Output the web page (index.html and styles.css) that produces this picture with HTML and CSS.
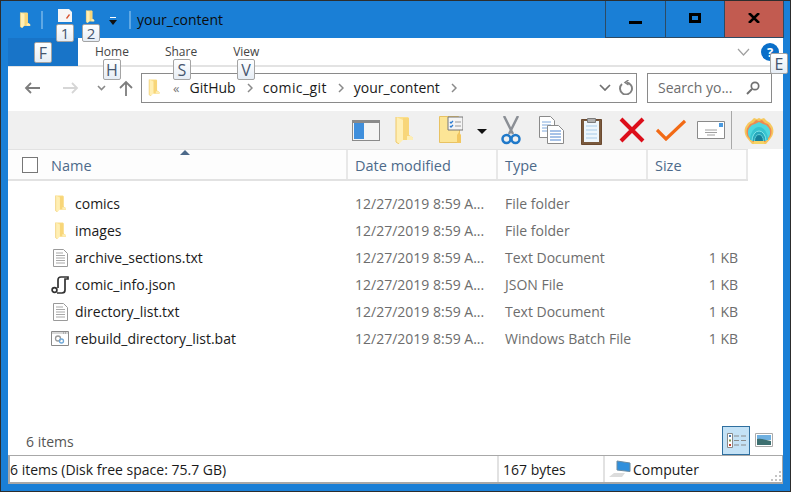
FILE: index.html
```html
<!DOCTYPE html>
<html lang="en">
<head>
    <meta charset="UTF-8">
    <title>your_content</title>
    <link rel="stylesheet" href="styles.css">
</head>
<body>
    <svg class="defs" width="0" height="0">
        <defs>
            <symbol id="folder" viewBox="0 0 18 28">
                <path d="M1 1h12l1 1v17l4 3v2H6l-2 3-3-2z" fill="#fbdf8c"/>
                <path d="M8 2h6v17l4 3v2H8z" fill="#f8d679"/>
                <path d="M12 20h4l2 2v2h-6z" fill="#fdeeb6"/>
                <path d="M1 1l7 3v20l-4 4-3-2z" fill="#ffefb4"/>
                <path d="M1 1v25l3 2" fill="none" stroke="#efc868"/>
            </symbol>
            <symbol id="textfile" viewBox="0 0 15 18">
                <path d="M.5.500h10l4 4v13H.5z" fill="#fff" stroke="#9a9a9a"/>
                <path d="M3 4h7M3 6.500h9M3 9h9M3 11.500h9M3 14h9" stroke="#a8a8a8"/>
            </symbol>
        </defs>
    </svg>
    <div class="window">
        <div class="titlebar">
            <svg class="qa-folder" width="12" height="16"><use href="#folder"/></svg>
            <span class="qa-sep"></span>
            <svg class="qa-props" width="14" height="13" viewBox="0 0 14 13"><path d="M0 0h11l3 3v10H0z" fill="#f6f6f6"/><path d="M8 9l3-4 1 1-3 4z" fill="#d8502a"/></svg>
            <svg class="qa-new" width="12" height="13"><use href="#folder"/></svg>
            <svg class="qa-arrow" width="8" height="8" viewBox="0 0 8 8"><path d="M1 0h6v1H1z" fill="#fff"/><path d="M0 3h8L4 8z" fill="#111"/></svg>
            <span class="qa-sep"></span>
            <span class="title-text">your_content</span>
            <div class="caption-btns">
                <div class="cap-btn"><span class="cap-min"></span></div>
                <div class="cap-btn"><span class="cap-max"></span></div>
                <div class="cap-btn cap-close">
                    <svg width="12" height="10" viewBox="0 0 12 10"><path d="M1 0l5 5 5-5M1 10l5-5 5 5" fill="none" stroke="#000" stroke-width="2.600"/></svg>
                </div>
            </div>
        </div>

        <div class="content">
            <div class="ribbon">
                <div class="file-tab"></div>
                <span class="tab tab-home">Home</span>
                <span class="tab tab-share">Share</span>
                <span class="tab tab-view">View</span>
                <svg class="ribbon-chevron" width="13" height="8" viewBox="0 0 13 8"><path d="M1 1l5.500 6L12 1" fill="none" stroke="#a0a0a0" stroke-width="1.200"/></svg>
                <div class="help">?</div>
            </div>

            <div class="addressbar">
                <svg class="nav nav-back" width="16" height="12" viewBox="0 0 16 12"><path d="M16 6H2M7 1L2 6l5 5" fill="none" stroke="#7d7d7d" stroke-width="1.800"/></svg>
                <svg class="nav nav-fwd" width="16" height="12" viewBox="0 0 16 12"><path d="M0 6h14M9 1l5 5-5 5" fill="none" stroke="#d6d6d6" stroke-width="1.800"/></svg>
                <svg class="nav nav-down" width="9" height="6" viewBox="0 0 9 6"><path d="M1 1l3.500 3.500L8 1" fill="none" stroke="#8a8a8a" stroke-width="1.600"/></svg>
                <svg class="nav nav-up" width="14" height="16" viewBox="0 0 14 16"><path d="M7 16V2M1 8l6-6 6 6" fill="none" stroke="#7d7d7d" stroke-width="1.800"/></svg>
                <div class="pathbox">
                    <svg class="path-folder" width="12" height="17"><use href="#folder"/></svg>
                    <span class="crumb-more">«</span>
                    <span class="crumb">GitHub</span>
                    <svg class="crumb-sep" width="6" height="10" viewBox="0 0 6 10"><path d="M1 1l4 4-4 4" fill="none" stroke="#8a8a8a" stroke-width="1.500"/></svg>
                    <span class="crumb crumb-wide">comic_git</span>
                    <svg class="crumb-sep" width="6" height="10" viewBox="0 0 6 10"><path d="M1 1l4 4-4 4" fill="none" stroke="#8a8a8a" stroke-width="1.500"/></svg>
                    <span class="crumb">your_content</span>
                    <svg class="crumb-sep" width="6" height="10" viewBox="0 0 6 10"><path d="M1 1l4 4-4 4" fill="none" stroke="#8a8a8a" stroke-width="1.500"/></svg>
                    <svg class="path-down" width="12" height="7" viewBox="0 0 12 7"><path d="M1 1l5 5 5-5" fill="none" stroke="#707070" stroke-width="1.700"/></svg>
                    <svg class="path-refresh" width="15" height="15" viewBox="0 0 15 15"><path d="M3 4A6 6 0 1 0 7.500 2.500" fill="none" stroke="#808080" stroke-width="1.900"/><path d="M9.500 0L6 2.500 9.500 5" fill="none" stroke="#808080" stroke-width="1.500"/></svg>
                </div>
                <div class="searchbox">
                    <span class="search-text">Search yo...</span>
                    <svg width="14" height="14" viewBox="0 0 14 14"><circle cx="9" cy="5" r="3.700" fill="none" stroke="#707070" stroke-width="1.700"/><path d="M6 8l-5 5" stroke="#707070" stroke-width="2"/></svg>
                </div>
            </div>

            <div class="toolbar">
                <svg class="tool tool-pane" width="28" height="21" viewBox="0 0 28 21"><path d="M0 0h28v21H0z" fill="#8a8a8a"/><path d="M1 3h26v17H1z" fill="#f4f4f4"/><path d="M2 3h10v16H2z" fill="#3f8fdc"/></svg>
                <svg class="tool tool-folder" width="18" height="28"><use href="#folder"/></svg>
                <svg class="tool tool-opts" width="24" height="28" viewBox="0 0 24 28"><path d="M.5.500h19l1 1v25H.5z" fill="#fce596" stroke="#e8c263"/><path d="M9 1h15v13H9z" fill="#f4f4f4" stroke="#777"/><path d="M11 6l1 1 2-2M11 10l1 1 2-2" stroke="#2b7bd0" stroke-width="1.300" fill="none"/><path d="M16 6h6M16 10h6" stroke="#999"/><path d="M18 19l2-3 2 3v8h-4z" fill="#f2c760"/></svg>
                <svg class="tool tool-drop" width="10" height="5" viewBox="0 0 10 5"><path d="M0 0h10L5 5z" fill="#111"/></svg>
                <svg class="tool tool-cut" width="20" height="29" viewBox="0 0 20 29"><path d="M3 0l9 18M17 0L8 18" stroke="#8b8f95" stroke-width="2.500"/><circle cx="5.500" cy="23" r="4" fill="none" stroke="#2079c9" stroke-width="2.500"/><circle cx="14.500" cy="23" r="4" fill="none" stroke="#2079c9" stroke-width="2.500"/></svg>
                <svg class="tool tool-copy" width="25" height="28" viewBox="0 0 25 28"><path d="M.5.500h11l4 4v17H.5z" fill="#fff" stroke="#8a8a8a"/><path d="M3 6h9M3 9h9M3 12h9M3 15h9" stroke="#7fa8dc"/><path d="M8.500 9.500h11l5 5v13h-16z" fill="#fff" stroke="#8a8a8a"/><path d="M11 15h11M11 18h11M11 21h11M11 24h11" stroke="#4f86d0"/></svg>
                <svg class="tool tool-paste" width="21" height="29" viewBox="0 0 21 29"><path d="M.5 3.500h20v25H.5z" fill="#7a5a3e" stroke="#6b4a30"/><path d="M3 5h15v21H3z" fill="#eef6fc"/><path d="M5 10h11M5 14h11M5 18h11M5 22h11" stroke="#a8cbe8"/><path d="M6.500 2.500h8v4h-8z" fill="#b0b0b0" stroke="#7d7d7d"/></svg>
                <svg class="tool tool-del" width="26" height="26" viewBox="0 0 26 26"><path d="M2 2l22 22M24 2L2 24" stroke="#dc0e1a" stroke-width="4"/></svg>
                <svg class="tool tool-check" width="30" height="22" viewBox="0 0 30 22"><path d="M1 11l9 9L29 2" fill="none" stroke="#f26a15" stroke-width="3.200"/></svg>
                <svg class="tool tool-mail" width="28" height="18" viewBox="0 0 28 18"><path d="M.5.500h27v17H.5z" fill="#fff" stroke="#8a8a8a"/><path d="M22 2h4v4h-4z" fill="#4a9ae0"/><path d="M8 9h12M8 11.500h12M10 14h8" stroke="#a0a0a0"/></svg>
                <span class="tool-sep"></span>
                <svg class="tool tool-shell" width="30" height="27" viewBox="0 0 30 27">
                    <path d="M8 27l-5-6C0 17 0 12 2 9l2-3 3-2 3-3 3 1 2-1 2 1 3-1 3 3 3 2 2 3c2 3 2 8-1 12l-5 6z" fill="#f6c85e"/>
                    <path d="M9 25l-5-5C2 17 2 12 4 10l2-3 3-1 3-3 3 1 3-1 3 3 3 1 2 3c2 2 2 7 0 10l-5 5z" fill="#ee8a52"/>
                    <path d="M5 20C3 16 4 12 6 10l2-2 3-1 4-2 4 2 3 1 2 2c2 2 3 6 1 10l-4 4H9z" fill="#4fd8de"/>
                    <path d="M6 23a9 13 0 0 1 18 0z" fill="#38c4d0"/>
                    <path d="M8 24a7 10 0 0 1 14 0z" fill="#27a8bc"/>
                    <path d="M8 24a7 10 0 0 1 14 0" fill="none" stroke="#7fe4e8"/>
                    <path d="M10.500 24a4.500 6.500 0 0 1 9 0z" fill="#17809a"/>
                    <path d="M10.500 24a4.500 6.500 0 0 1 9 0" fill="none" stroke="#62d0d8"/>
                    <path d="M10 24h10v3H10z" fill="#f6d465"/>
                </svg>
            </div>

            <div class="filelist">
                <div class="row header">
                    <div class="col col-name">
                        <span class="check"></span>
                        <span class="col-label">Name</span>
                        <span class="sort-arrow"></span>
                    </div>
                    <div class="col"><span class="col-label">Date modified</span></div>
                    <div class="col"><span class="col-label">Type</span></div>
                    <div class="col"><span class="col-label">Size</span></div>
                </div>
                <div class="rows">
                    <div class="row item">
                        <div class="item-name"><span class="item-icon"><svg width="13" height="17"><use href="#folder"/></svg></span>comics</div>
                        <div class="cell">12/27/2019 8:59 A...</div>
                        <div class="cell">File folder</div>
                        <div class="cell"></div>
                    </div>
                    <div class="row item">
                        <div class="item-name"><span class="item-icon"><svg width="13" height="17"><use href="#folder"/></svg></span>images</div>
                        <div class="cell">12/27/2019 8:59 A...</div>
                        <div class="cell">File folder</div>
                        <div class="cell"></div>
                    </div>
                    <div class="row item">
                        <div class="item-name"><span class="item-icon"><svg width="15" height="18"><use href="#textfile"/></svg></span>archive_sections.txt</div>
                        <div class="cell">12/27/2019 8:59 A...</div>
                        <div class="cell">Text Document</div>
                        <div class="cell size">1 KB</div>
                    </div>
                    <div class="row item">
                        <div class="item-name"><span class="item-icon"><svg width="18" height="18" viewBox="0 0 18 18"><path d="M7 12V4c0-2 1-3 3-3h7v2h-3v11c0 2-1 3-3 3H6" fill="none" stroke="#333" stroke-width="1.700"/><circle cx="3.500" cy="14" r="2.400" fill="none" stroke="#333" stroke-width="1.700"/></svg></span>comic_info.json</div>
                        <div class="cell">12/27/2019 8:59 A...</div>
                        <div class="cell">JSON File</div>
                        <div class="cell size">1 KB</div>
                    </div>
                    <div class="row item">
                        <div class="item-name"><span class="item-icon"><svg width="15" height="18"><use href="#textfile"/></svg></span>directory_list.txt</div>
                        <div class="cell">12/27/2019 8:59 A...</div>
                        <div class="cell">Text Document</div>
                        <div class="cell size">1 KB</div>
                    </div>
                    <div class="row item">
                        <div class="item-name"><span class="item-icon"><svg width="18" height="15" viewBox="0 0 18 15"><path d="M.5.500h17v14H.5z" fill="#fff" stroke="#8a8a8a"/><path d="M1 1h16v2H1z" fill="#d8d8d8"/><path d="M12 2h4" stroke="#888" stroke-dasharray="1 1"/><circle cx="7" cy="7.500" r="2.500" fill="none" stroke="#9a9a9a" stroke-width="1.300"/><circle cx="10.500" cy="10" r="2" fill="none" stroke="#6fa8d8" stroke-width="1.300"/></svg></span>rebuild_directory_list.bat</div>
                        <div class="cell">12/27/2019 8:59 A...</div>
                        <div class="cell">Windows Batch File</div>
                        <div class="cell size">1 KB</div>
                    </div>
                </div>
            </div>

            <div class="viewbar">
                <span class="item-count">6 items</span>
                <div class="view-btn active">
                    <svg width="19" height="15" viewBox="0 0 19 15"><path d="M.5.500h5v14h-5z" fill="#fff" stroke="#888"/><path d="M2 2h2v2H2z" fill="#4a7ab0"/><path d="M2 6.500h2v2H2z" fill="#7a9a50"/><path d="M2 11h2v2H2z" fill="#c04030"/><path d="M7 3h5M14 3h5M7 7.500h5M14 7.500h5M7 12h5M14 12h5" stroke="#8a8a8a"/></svg>
                </div>
                <div class="view-btn">
                    <svg width="18" height="14" viewBox="0 0 18 14"><path d="M.5.500h17v13H.5z" fill="#fff" stroke="#aaa"/><path d="M2 2h14v5H2z" fill="#6fb0e0"/><path d="M2 6c5-1 9 1 14 2v4H2z" fill="#3d6f70"/></svg>
                </div>
            </div>

            <div class="statusbar">
                <div class="status-left">6 items (Disk free space: 75.7 GB)</div>
                <div class="status-size">167 bytes</div>
                <div class="status-zone">
                    <svg width="22" height="18" viewBox="0 0 22 18"><path d="M8 1l13 2v8.500L8 10z" fill="#2f8fdc" stroke="#6a8aa0"/><path d="M0 17l5-4h11l-3 4z" fill="#dcdcdc"/></svg>
                    Computer
                </div>
                <svg class="grip" width="12" height="12" viewBox="0 0 12 12"><path d="M9 1h2v2H9zM5 5h2v2H5zM9 5h2v2H9zM1 9h2v2H1zM5 9h2v2H5zM9 9h2v2H9z" fill="#c4c4c4"/></svg>
            </div>

            <span class="keytip key-f">F</span>
            <span class="keytip key-h">H</span>
            <span class="keytip key-s">S</span>
            <span class="keytip key-v">V</span>
            <span class="keytip key-e">E</span>
        </div>
        <span class="keytip key-qa key-1">1</span>
        <span class="keytip key-qa key-2">2</span>
    </div>
</body>
</html>
```

FILE: styles.css
```css
* {
    box-sizing: border-box;
}
html, body {
    margin: 0;
    height: 100%;
    overflow: hidden;
}
body {
    font-family: "Open Sans", "Noto Sans", sans-serif;
    font-size: 14px;
    color: #1a1a1a;
    background-color: #1a7fd6;
}
.defs {
    position: absolute;
}
svg {
    display: block;
    flex: none;
}
.window {
    position: relative;
    width: 791px;
    height: 492px;
    display: flex;
    flex-direction: column;
    background-color: #1a7fd6;
    border: 1px solid #2d2d2d;
}

/* title bar */
.titlebar {
    height: 37px;
    display: flex;
    align-items: center;
    padding-left: 18px;
    flex: none;
}
.qa-sep {
    width: 2px;
    height: 18px;
    background-color: #5fa8e4;
}
.qa-folder {
    margin-right: 10px;
}
.qa-props {
    margin: -8px 0 0 15px;
}
.qa-new {
    margin: -7px 0 0 12px;
}
.qa-arrow {
    margin: 3px 12px 0 13px;
}
.title-text {
    margin-left: 6px;
    color: #0c0c0c;
    font-size: 14px;
}
.caption-btns {
    margin-left: auto;
    margin-right: 6px;
    display: flex;
    align-self: flex-start;
    height: 37px;
}
.cap-btn {
    width: 59px;
    display: flex;
    align-items: center;
    justify-content: center;
    border-left: 1px solid #2d4a63;
    border-bottom: 1px solid #2d4a63;
    padding-bottom: 2px;
}
.cap-btn:first-child {
    width: 60px;
}
.cap-btn:last-child {
    width: 60px;
    border-right: 1px solid #2d4a63;
}
.cap-min {
    width: 13px;
    height: 3px;
    margin-top: 8px;
    background-color: #000;
}
.cap-max {
    width: 12px;
    height: 10px;
    border: 3px solid #000;
}
.cap-close {
    background-color: #c25b50;
}

/* main area */
.content {
    flex: 1;
    display: flex;
    flex-direction: column;
    margin: 0 7px 7px 7px;
    background-color: #fff;
    position: relative;
}
.ribbon {
    height: 29px;
    display: flex;
    align-items: center;
    border-bottom: 2px solid #e3e3e3;
    font-size: 12px;
    color: #444;
    position: relative;
    flex: none;
}
.file-tab {
    width: 70px;
    height: 28px;
    align-self: flex-start;
    background-color: #1874c8;
}
.tab {
    line-height: 12px;
    margin-top: 1px;
}
.tab-home {
    margin-left: 17px;
}
.tab-share {
    margin-left: 36px;
}
.tab-view {
    margin-left: 36px;
}
.ribbon-chevron {
    margin-left: auto;
    margin-right: 11px;
}
.help {
    width: 18px;
    height: 18px;
    margin-right: 4px;
    border-radius: 50%;
    background-color: #0a6fc9;
    color: #fff;
    font-weight: bold;
    font-size: 13px;
    line-height: 18px;
    text-align: center;
}
.addressbar {
    height: 44px;
    display: flex;
    align-items: center;
    padding-bottom: 3px;
    flex: none;
}
.nav-back {
    margin-left: 16px;
}
.nav-fwd {
    margin-left: 23px;
}
.nav-down {
    margin-left: 18px;
    margin-top: 1px;
}
.nav-up {
    margin-left: 13px;
}
.pathbox {
    margin-left: 8px;
    width: 496px;
    height: 30px;
    border: 1px solid #8a8a8a;
    display: flex;
    align-items: center;
    padding-left: 6px;
}
.crumb-more {
    margin-left: 13px;
    color: #777;
    font-size: 13px;
}
.crumb {
    margin-left: 10px;
    margin-right: 11px;
}
.crumb-wide {
    letter-spacing: 0.4px;
}
.path-down {
    margin-left: auto;
}
.path-refresh {
    margin: 0 2px 0 8px;
}
.searchbox {
    margin-left: 10px;
    width: 125px;
    height: 30px;
    border: 1px solid #8a8a8a;
    display: flex;
    align-items: center;
    justify-content: space-between;
    padding: 0 11px 0 10px;
    color: #6d6d6d;
}
.toolbar {
    height: 38px;
    background-color: #f0f0f0;
    display: flex;
    align-items: center;
    padding-left: 344px;
    flex: none;
}
.tool-folder {
    margin-left: 15px;
}
.tool-opts {
    margin-left: 26px;
}
.tool-drop {
    margin-left: 14px;
    margin-top: 3px;
}
.tool-cut {
    margin-left: 14px;
}
.tool-copy {
    margin-left: 18px;
}
.tool-paste {
    margin-left: 17px;
}
.tool-del {
    margin-left: 17px;
}
.tool-check {
    margin-left: 11px;
}
.tool-mail {
    margin-left: 11px;
}
.tool-sep {
    width: 1px;
    height: 38px;
    margin-left: 6px;
    background-color: #a8a8a8;
}
.tool-shell {
    margin-left: 12px;
}

/* file list */
.filelist {
    flex: 1;
    color: #1a1a1a;
}
.row {
    display: grid;
    grid-template-columns: 340px 150px 150px 100px;
}
.header {
    height: 32px;
    width: 740px;
    background-color: #fdfdfd;
    border-top: 1px solid #e2e2e2;
    border-bottom: 2px solid #e2e2e2;
    color: #4d6a8a;
    font-size: 14.5px;
}
.col {
    display: flex;
    align-items: center;
    padding-left: 7px;
    border-right: 2px solid #e8e8e8;
}
.col-label {
    padding-top: 2px;
}
.col-name {
    position: relative;
    padding-left: 14px;
}
.check {
    width: 16px;
    height: 16px;
    margin-right: 13px;
    border: 1px solid #777;
    background-color: #fff;
}
.sort-arrow {
    position: absolute;
    left: 172px;
    top: 0;
    border-left: 5px solid transparent;
    border-right: 5px solid transparent;
    border-bottom: 5px solid #4d6a8a;
}
.rows {
    padding-top: 9px;
}
.item {
    height: 27px;
    align-items: center;
}
.item-name {
    display: flex;
    align-items: center;
    padding-left: 37px;
    white-space: nowrap;
}
.item-icon {
    width: 30px;
    display: flex;
    justify-content: center;
}
.cell {
    padding-left: 7px;
    color: #6d6d6d;
    white-space: nowrap;
}
.size {
    text-align: right;
    padding-right: 10px;
}

/* bottom */
.viewbar {
    height: 30px;
    display: flex;
    align-items: center;
    padding-left: 18px;
    padding-right: 5px;
    color: #555;
    flex: none;
}
.item-count {
    margin-right: auto;
    padding-top: 2px;
}
.view-btn {
    width: 28px;
    height: 29px;
    display: flex;
    align-items: center;
    justify-content: center;
}
.view-btn.active {
    background-color: #c4e2f6;
    border: 1px solid #2f6f9f;
}
.statusbar {
    height: 29px;
    display: flex;
    align-items: center;
    position: relative;
    border: 2px solid #a8a8a8;
    border-width: 1px 1px 2px 2px;
    flex: none;
}
.status-left {
    width: 489px;
    height: 100%;
    display: flex;
    align-items: center;
    border-right: 2px solid #e2e2e2;
}
.status-size {
    width: 106px;
    height: 100%;
    padding-left: 4px;
    display: flex;
    align-items: center;
    border-right: 2px solid #e2e2e2;
}
.status-zone {
    display: flex;
    align-items: center;
    gap: 2px;
    padding-left: 4px;
}
.grip {
    position: absolute;
    right: 0;
    bottom: 0;
}

/* keytips */
.keytip {
    position: absolute;
    width: 18px;
    height: 21px;
    display: flex;
    align-items: center;
    justify-content: center;
    background: linear-gradient(#ffffff, #e6edf5);
    border: 1px solid #a4a4a4;
    border-radius: 2px;
    font-size: 16px;
    line-height: 18px;
    color: #46566e;
}
.key-qa {
    height: 18px;
    font-size: 15px;
}
.key-1 { left: 55px; top: 23px; }
.key-2 { left: 81px; top: 23px; }
.key-f { left: 26px; top: 4px; }
.key-h { left: 95px; top: 21px; }
.key-s { left: 165px; top: 21px; }
.key-v { left: 229px; top: 21px; }
.key-e { left: 762px; top: 15px; }
```
